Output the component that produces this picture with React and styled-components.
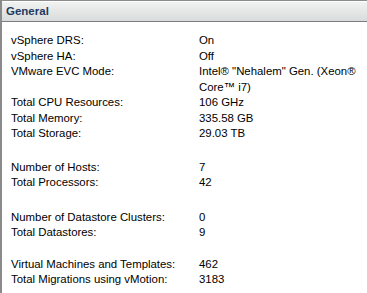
import React from "react";
import styled, { createGlobalStyle } from "styled-components";

const GlobalStyle = createGlobalStyle`
  html, body {
    margin: 0;
    padding: 0;
    background: #ffffff;
  }
  body {
    font-family: Tahoma, "Liberation Sans", Arial, sans-serif;
    font-size: 11px;
    color: #000;
  }
`;

const Panel = styled.div`
  width: 367px;
  height: 293px;
  box-sizing: border-box;
  border-left: 2px solid #8a8a8a;
  background: #fff;
  overflow: hidden;
`;

const Header = styled.div`
  height: 22px;
  box-sizing: border-box;
  border-top: 1px solid #8c8c8c;
  border-bottom: 1px solid #7c7c7c;
  box-shadow: inset 0 1px 0 #ffffff;
  background: linear-gradient(#f2f3f3, #d9dcdc);
  display: flex;
  align-items: center;
  padding-left: 4px;
`;

const Title = styled.h2`
  margin: 0;
  font-family: "Liberation Sans", Arial, sans-serif;
  font-size: 11.5px;
  font-weight: bold;
  color: #1e3a60;
`;

const Body = styled.div`
  padding: 11px 0 0 9px;
`;

const Group = styled.div`
  display: flex;
  flex-direction: column;
  margin-bottom: ${p => p.$gap || 0}px;
`;

const Row = styled.div`
  display: grid;
  grid-template-columns: 188px 162px;
  line-height: 15.5px;
  font-family: "Liberation Sans", Arial, sans-serif;
  font-size: 11.4px;
`;

const Label = styled.span`
  white-space: nowrap;
`;

const Value = styled.span``;

const groups = [
  {
    gap: 18,
    rows: [
      ["vSphere DRS:", "On"],
      ["vSphere HA:", "Off"],
      ["VMware EVC Mode:", "Intel® \"Nehalem\" Gen. (Xeon® Core™ i7)"],
      ["Total CPU Resources:", "106 GHz"],
      ["Total Memory:", "335.58 GB"],
      ["Total Storage:", "29.03 TB"],
    ],
  },
  {
    gap: 19,
    rows: [
      ["Number of Hosts:", "7"],
      ["Total Processors:", "42"],
    ],
  },
  {
    gap: 16,
    rows: [
      ["Number of Datastore Clusters:", "0"],
      ["Total Datastores:", "9"],
    ],
  },
  {
    gap: 0,
    rows: [
      ["Virtual Machines and Templates:", "462"],
      ["Total Migrations using vMotion:", "3183"],
    ],
  },
];

export default function App() {
  return (
    <>
      <GlobalStyle />
      <Panel>
        <Header>
          <Title>General</Title>
        </Header>
        <Body>
          {groups.map((g, i) => (
            <Group key={i} $gap={g.gap}>
              {g.rows.map(([label, value]) => (
                <Row key={label}>
                  <Label>{label}</Label>
                  <Value>{value}</Value>
                </Row>
              ))}
            </Group>
          ))}
        </Body>
      </Panel>
    </>
  );
}
